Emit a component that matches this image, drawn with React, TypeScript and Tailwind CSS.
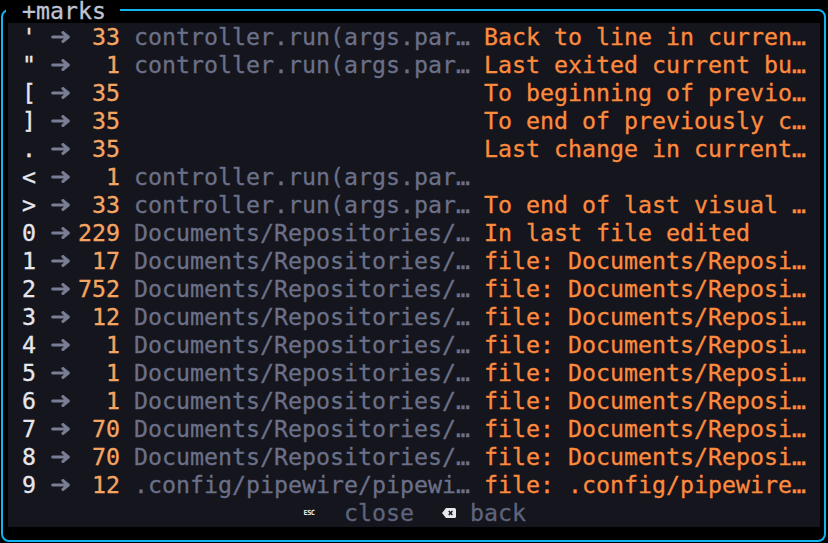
const marks = [
  { k: "'", n: "33", p: "controller.run(args.par…", d: "Back to line in curren…" },
  { k: '"', n: "1", p: "controller.run(args.par…", d: "Last exited current bu…" },
  { k: "[", n: "35", p: "", d: "To beginning of previo…" },
  { k: "]", n: "35", p: "", d: "To end of previously c…" },
  { k: ".", n: "35", p: "", d: "Last change in current…" },
  { k: "<", n: "1", p: "controller.run(args.par…", d: "" },
  { k: ">", n: "33", p: "controller.run(args.par…", d: "To end of last visual …" },
  { k: "0", n: "229", p: "Documents/Repositories/…", d: "In last file edited" },
  { k: "1", n: "17", p: "Documents/Repositories/…", d: "file: Documents/Reposi…" },
  { k: "2", n: "752", p: "Documents/Repositories/…", d: "file: Documents/Reposi…" },
  { k: "3", n: "12", p: "Documents/Repositories/…", d: "file: Documents/Reposi…" },
  { k: "4", n: "1", p: "Documents/Repositories/…", d: "file: Documents/Reposi…" },
  { k: "5", n: "1", p: "Documents/Repositories/…", d: "file: Documents/Reposi…" },
  { k: "6", n: "1", p: "Documents/Repositories/…", d: "file: Documents/Reposi…" },
  { k: "7", n: "70", p: "Documents/Repositories/…", d: "file: Documents/Reposi…" },
  { k: "8", n: "70", p: "Documents/Repositories/…", d: "file: Documents/Reposi…" },
  { k: "9", n: "12", p: ".config/pipewire/pipewi…", d: "file: .config/pipewire…" },
];

function Arrow() {
  return (
    <svg width="20" height="12" viewBox="0 0 20 12" className="ml-[1px]">
      <path
        d="M1.8 6 H16.5 M12 1.6 L17.2 6 L12 10.4"
        fill="none"
        stroke="#7a7e94"
        strokeWidth="3.2"
        strokeLinecap="round"
        strokeLinejoin="round"
      />
    </svg>
  );
}

function Backspace() {
  return (
    <svg width="14" height="10" viewBox="0 0 14 10">
      <path d="M4 0 H12.5 Q14 0 14 1.5 V8.5 Q14 10 12.5 10 H4 L0 5 Z" fill="#e6e6ec" />
      <path d="M6.8 3 L10.4 7 M10.4 3 L6.8 7" stroke="#14151d" strokeWidth="1.5" />
    </svg>
  );
}

function MarkRow({ k, n, p, d }: { k: string; n: string; p: string; d: string }) {
  return (
    <div className="flex h-[28px] items-center whitespace-pre">
      <span className="w-[14px] text-center text-[#e6e6ec]">{k}</span>
      <span className="w-[14px]" />
      <span className="flex w-[28px] items-center">
        <Arrow />
      </span>
      <span className="w-[42px] text-right text-[#f4a561]">{n}</span>
      <span className="w-[14px]" />
      <span className="w-[336px] overflow-hidden text-[#6b7089]">{p}</span>
      <span className="w-[14px]" />
      <span className="text-[#fd8b3d]">{d}</span>
    </div>
  );
}

export default function App() {
  return (
    <div
      className="h-[543px] w-[828px] overflow-hidden bg-black pl-[1px] pt-[9px] text-[23.25px] leading-[28px] [-webkit-text-stroke:0.3px_currentColor]"
      style={{ fontFamily: '"DejaVu Sans Mono", "Liberation Mono", monospace' }}
    >
      <div className="relative h-[533px] w-[825px] rounded-[8px] border-2 border-[#10b4ee] pb-[12px] pl-[5px] pr-[4px] pt-[12px]">
        <div className="absolute left-[3px] top-[-9px] flex h-[18px] items-center bg-black pl-[16px] pr-[14px] leading-[18px] text-[#bfc3d4]">
          +marks
        </div>
        <div className="h-[504px] w-[812px] bg-[#14151d] px-[14px]">
          {marks.map((m) => (
            <MarkRow key={m.k} {...m} />
          ))}
          <div className="flex h-[28px] items-center justify-center whitespace-pre text-[#5f647d]">
            <span className="flex w-[14px] justify-center text-[7px] font-bold leading-none tracking-[-0.5px] text-[#ececf0] [-webkit-text-stroke:0px]">
              ESC
            </span>
            <span className="w-[28px]" />
            <span className="w-[70px]">close</span>
            <span className="w-[28px]" />
            <span className="flex w-[14px] items-center">
              <Backspace />
            </span>
            <span className="w-[14px]" />
            <span className="w-[56px]">back</span>
          </div>
        </div>
      </div>
    </div>
  );
}
